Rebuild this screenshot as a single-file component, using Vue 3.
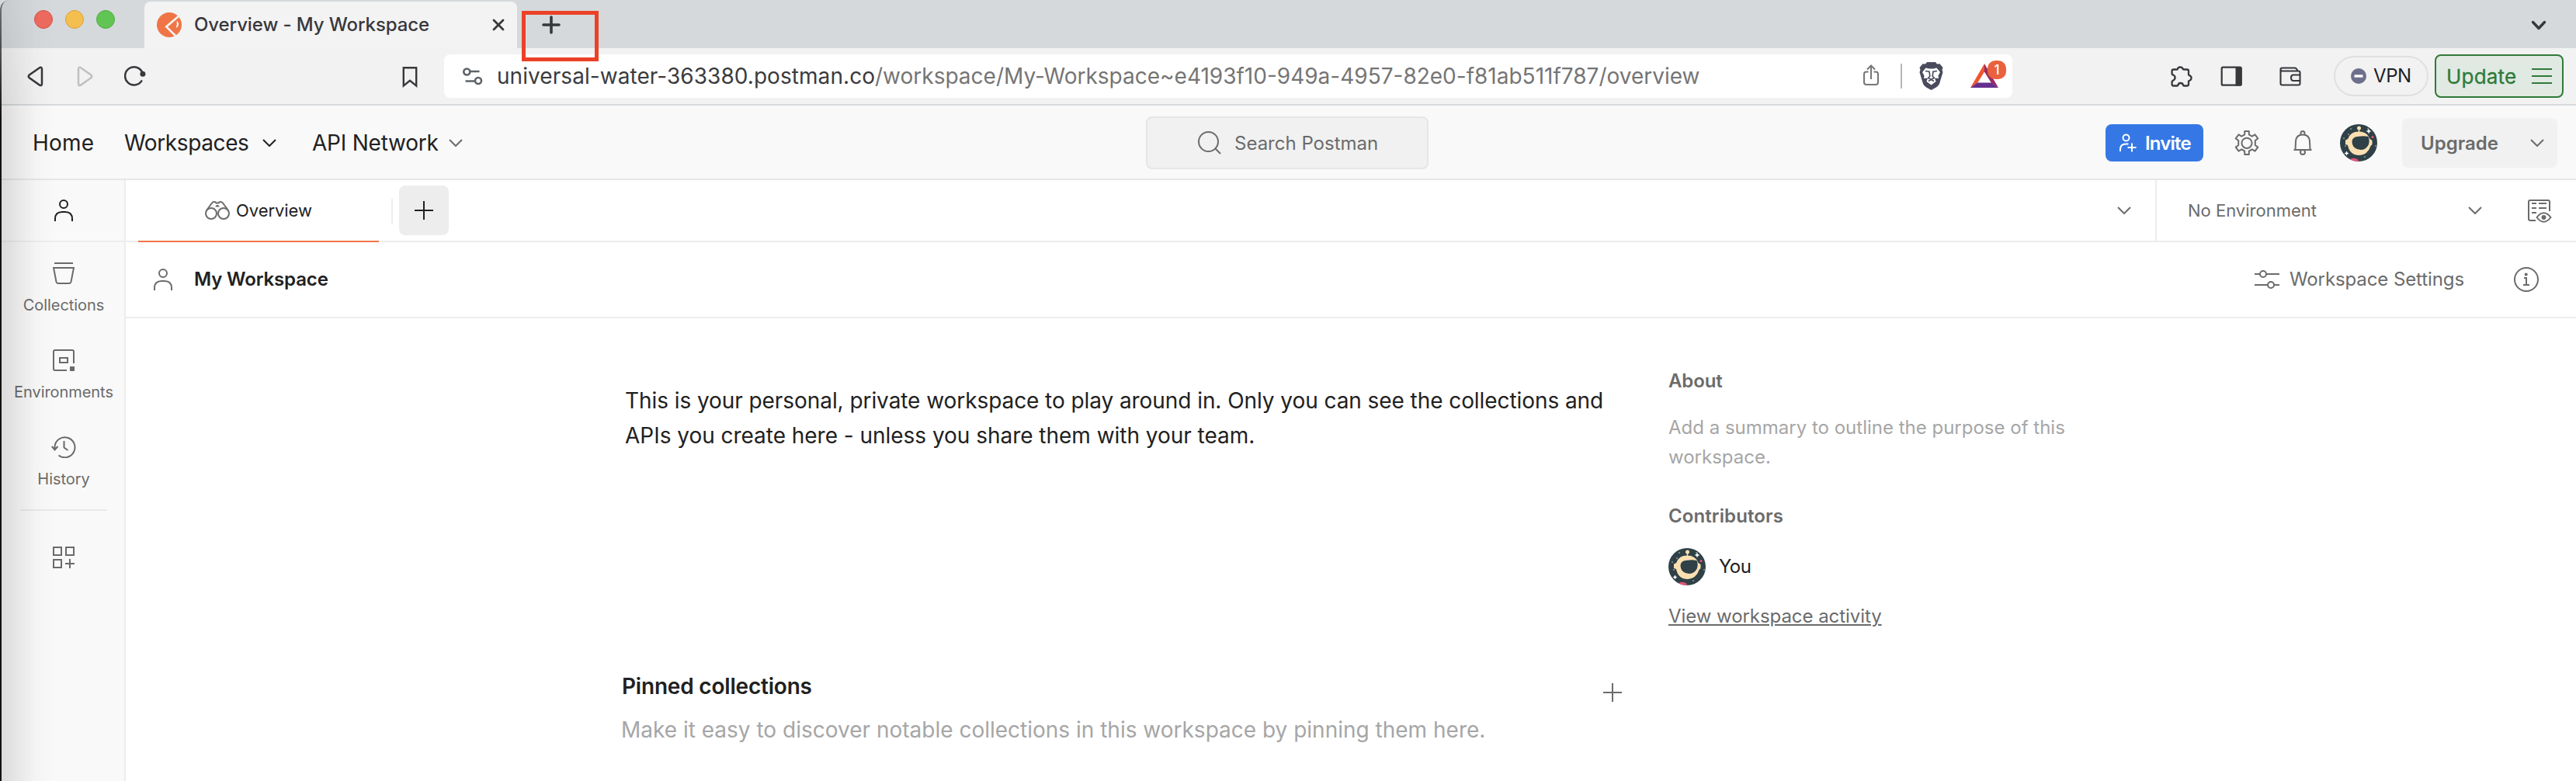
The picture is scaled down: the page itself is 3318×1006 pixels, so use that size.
<script setup>
const nav = [
  { label: 'Collections', icon: 'collections' },
  { label: 'Environments', icon: 'environments' },
  { label: 'History', icon: 'history' }
]
const stars = [[5, 18], [14, 6], [11, 13], [7, 28], [46, 28], [32, 42], [36, 6]]
</script>

<template>
  <div class="window">
    <header class="tabstrip">
      <div class="lights"><i class="red"></i><i class="amber"></i><i class="green"></i></div>
      <div class="btab">
        <svg width="32" height="32" viewBox="0 0 32 32">
          <circle cx="16" cy="16" r="16" fill="#f07546" />
          <path d="M28.5 4.5 12.2 18.4 24 30" fill="none" stroke="#f6f3f1" stroke-width="2.6" />
          <path d="M26.2 11.6Q29.6 15.5 25.4 19.4Q26.6 15.4 26.2 11.6Z" fill="#fff" stroke="#fff" stroke-width=".8" />
        </svg>
        <span class="btitle">Overview - My Workspace</span>
        <svg class="close" width="16" height="16" viewBox="0 0 16 16"><path d="M2 2 14 14M14 2 2 14" fill="none" stroke="#37383c" stroke-width="2.8" stroke-linecap="round" /></svg>
      </div>
      <div class="newtab">
        <svg width="24" height="24" viewBox="0 0 24 24"><path d="M12 2V22M2 12H22" fill="none" stroke="#37383c" stroke-width="3.6" stroke-linecap="round" /></svg>
        <div class="marker"></div>
      </div>
      <svg class="strip-chev" width="20" height="14" viewBox="0 0 20 14"><path d="M2.5 2.5 10 10.5 17.5 2.5" fill="none" stroke="#37383c" stroke-width="3.4" stroke-linecap="round" stroke-linejoin="round" /></svg>
    </header>

    <div class="toolbar">
      <svg class="back" width="21" height="27" viewBox="0 0 21 27"><path d="M16 2.2 2.8 11.4Q.8 13.4 2.8 15.4L16 24.6Q19 26 19 22.8V4Q19 .8 16 2.2Z" fill="none" stroke="#37383c" stroke-width="2.5" /></svg>
      <svg class="fwd" width="21" height="27" viewBox="0 0 21 27"><path d="M5 2.2 18.2 11.4Q20.2 13.4 18.2 15.4L5 24.6Q2 26 2 22.8V4Q2 .8 5 2.2Z" fill="none" stroke="#c0c0c0" stroke-width="2.5" /></svg>
      <svg class="reload" width="28" height="28" viewBox="0 0 28 28"><path d="M23.6 10A11.6 11.6 0 1 0 22.3 20.4" fill="none" stroke="#37383c" stroke-width="2.5" stroke-linecap="round" /><circle cx="23.9" cy="11.3" r="3.5" fill="#37383c" /></svg>
      <svg class="bookmark" width="20" height="28" viewBox="0 0 20 28"><path d="M1.8 2.2H18.2V25.4L10 18.8 1.8 25.4Z" fill="none" stroke="#37383c" stroke-width="2.4" /></svg>
      <div class="urlbar">
        <svg class="tune" width="26" height="24" viewBox="0 0 26 24" fill="none" stroke="#5f6368" stroke-width="2.6"><circle cx="5.3" cy="6.5" r="4" /><path d="M9.5 6H21.5M3.5 18.5H15" /><circle cx="20" cy="18" r="4" /></svg>
        <span class="url"><b>universal-water-363380.postman.co</b>/workspace/My-Workspace~e4193f10-949a-4957-82e0-f81ab511f787/overview</span>
        <svg class="share" width="20" height="28" viewBox="0 0 20 28" fill="none" stroke="#76767a" stroke-width="2"><path d="M6.5 9.5H4Q1 9.5 1 12.5V23Q1 26 4 26H16Q19 26 19 23V12.5Q19 9.5 16 9.5H13.5M10 19V1.5M5 6.5 10 1.5 15 6.5" /></svg>
        <i class="urlsep"></i>
        <svg class="lion" width="31" height="36" viewBox="0 0 31 36">
          <path d="M8 2.5 10 0H21L23 2.5 26.5 2.3 30.5 7 29.5 10 30.5 13 26 28Q25 30.5 22 32.5L15.5 36 9 32.5Q6 30.5 5 28L.5 13 1.5 10 .5 7 4.5 2.3Z" fill="#4a4c5e" />
          <path d="M8.5 7.5 13 8.5H18L22.5 7.5 27 13 24.5 17.5 25 21 20 20.5 21.5 25 15.5 29.5 9.5 25 11 20.5 6 21 6.5 17.5 4 13Z" fill="#fff" />
          <path d="M8 11.5 13 12.2 13.8 18 11.8 20.5 15.5 22.6 19.2 20.5 17.2 18 18 12.2 23 11.5M12 24.5 15.5 22.5 19 24.5" fill="none" stroke="#4a4c5e" stroke-width="1.7" />
        </svg>
        <div class="bat">
          <svg width="36" height="32" viewBox="0 0 36 32"><path d="M18 0V10.5L9 25 0 31Z" fill="#f0562e" /><path d="M18 0 36 31 27 25 18 10.5Z" fill="#982b62" /><path d="M0 31 9 24.5H27L36 31Z" fill="#662f8e" /></svg>
          <span class="badge">1</span>
        </div>
      </div>
      <svg class="puzzle" width="28" height="28" viewBox="0 0 28 28"><path d="M3.5 4.5H8.2Q9 4.5 9 3.5Q9.6 1.5 12.2 1.5Q14.8 1.5 15.5 3.5Q15.6 4.5 16.5 4.5H21Q23 4.5 23 6.5V11Q23 12 24 12.2Q26.5 13 26.5 15.5Q26.5 18 24 18.8Q23 19 23 20V23.5Q23 25.5 21 25.5H17Q16.2 25.5 16 24.5Q15.4 22 12.7 22Q10 22 9.4 24.5Q9.2 25.5 8.2 25.5H3.5Q1.6 25.5 1.6 23.5V20.5Q1.6 19.5 2.5 19Q5.6 17.5 5.6 15Q5.6 12.5 2.5 11.3Q1.6 11 1.6 10V6.5Q1.6 4.5 3.5 4.5Z" fill="none" stroke="#37383c" stroke-width="2.3" /></svg>
      <svg class="panel" width="28" height="26" viewBox="0 0 28 26"><rect x="1.7" y="1.7" width="25" height="23" rx="1.5" fill="none" stroke="#37383c" stroke-width="2.2" /><path d="M19.5 1H25.5Q27.5 1 27.5 3V23.5Q27.5 25.5 25.5 25.5H19.5Z" fill="#37383c" /></svg>
      <svg class="wallet" width="28" height="26" viewBox="0 0 28 26" fill="none" stroke="#37383c" stroke-width="2.1"><path d="M1.5 4V21.5Q1.5 23.5 3.5 23.5H24.5Q26.5 23.5 26.5 21.5V7.5Q26.5 5.5 24.5 5.5H3.5Q1.5 5.5 1.5 3.3Q1.5 1.5 3.5 1.5H20Q22 1.5 23.5 5.5" /><path d="M26.5 10.5H18Q15 10.5 15 14Q15 18 18 18H26.5" /></svg>
      <div class="vpn"><svg width="20" height="20" viewBox="0 0 20 20"><circle cx="10" cy="10" r="10" fill="#6d708b" /><path d="M4.5 10H15.5" stroke="#fff" stroke-width="3.4" /></svg><span>VPN</span></div>
      <div class="update"><span>Update</span><svg width="26" height="20" viewBox="0 0 26 20"><path d="M0 1H26M0 10H26M0 19H26" stroke="#2f7a38" stroke-width="2.2" /></svg></div>
    </div>

    <div class="apphead">
      <span class="home">Home</span>
      <span class="wss">Workspaces</span>
      <svg class="c1" width="18" height="10" viewBox="0 0 18 10"><path d="M1 1 9 9 17 1" fill="none" stroke="#212121" stroke-width="2" /></svg>
      <span class="apin">API Network</span>
      <svg class="c2" width="18" height="10" viewBox="0 0 18 10"><path d="M1 1 9 9 17 1" fill="none" stroke="#6b6b6b" stroke-width="2" /></svg>
      <div class="search">
        <svg width="30" height="30" viewBox="0 0 30 30" fill="none" stroke="#6b6b6b" stroke-width="2"><circle cx="13.5" cy="13.5" r="12.5" /><path d="M22.5 22.5 29 29" /></svg>
        <span>Search Postman</span>
      </div>
      <div class="headright">
        <div class="invite">
          <svg width="22" height="24" viewBox="0 0 22 24" fill="none" stroke="#fff" stroke-width="2"><circle cx="8.5" cy="5.5" r="4" /><path d="M1 23V20.5Q1 13.5 8 13.5H11.5M16 12.5V23.5M10.5 18H21.5" /></svg>
          <span>Invite</span>
        </div>
        <svg class="gear" width="32" height="32" viewBox="0 0 32 32" fill="none" stroke="#6b6b6b" stroke-width="2"><path d="M13.2 1H18.8V5.3L22.7 7.6 26.5 5.4 30.3 10.4 26.8 13V19L30.3 21.6 26.5 26.6 22.7 24.4 18.8 26.7V31H13.2V26.7L9.3 24.4 5.5 26.6 1.7 21.6 5.2 19V13L1.7 10.4 5.5 5.4 9.3 7.6 13.2 5.3Z" stroke-linejoin="round" /><circle cx="16" cy="16.3" r="6.6" /></svg>
        <svg class="bell" width="24" height="32" viewBox="0 0 24 32" fill="none" stroke="#6b6b6b" stroke-width="2"><path d="M.5 25H23.5M2.5 25 3 14Q3.5 5.5 12 5.5Q20.5 5.5 21 14L21.5 25M9.5 6V3.5Q9.5 1 12 1Q14.5 1 14.5 3.5V6" /><circle cx="12" cy="28" r="3" /></svg>
        <svg class="avatar" width="48" height="48" viewBox="0 0 48 48">
          <circle cx="24" cy="24" r="24" fill="#2f4147" />
          <circle v-for="(s, i) in stars" :key="i" :cx="s[0]" :cy="s[1]" r=".8" fill="#cfd6d8" />
          <path d="M37 5.5 38 8 40.5 9 38 10 37 12.5 36 10 33.5 9 36 8ZM8.5 34.5 9.5 36.5 11.5 37.5 9.5 38.5 8.5 40.5 7.5 38.5 5.5 37.5 7.5 36.5Z" fill="#fff" />
          <path d="M24 9.5Q13.5 9.5 10.5 18.5Q9 20 7 20.5V26L10 27Q12.5 40 25 40Q36 39 39.5 28L41.5 26V21L38.5 19Q35 9.5 24 9.5Z" fill="#fbdfb1" />
          <circle cx="24.500" cy="5" r="2.5" fill="#fbdfb1" /><path d="M24.5 6V11" stroke="#fbdfb1" stroke-width="1.4" />
          <path d="M24 15.700Q31 14.500 36.500 16Q38.500 20 37 26Q33.500 33 27 33Q15.500 32 15.500 22Q16 16 24 15.700Z" fill="#2f4147" />
          <circle cx="42" cy="16.5" r="1.5" fill="#e9547b" /><path d="M13 45Q19 41.500 25 47Q18 49 13 45Z" fill="#e9547b" />
        </svg>
        <div class="upgrade"><span>Upgrade</span><svg width="18" height="10" viewBox="0 0 18 10"><path d="M1 1 9 9 17 1" fill="none" stroke="#6b6b6b" stroke-width="2" /></svg></div>
      </div>
    </div>

    <div class="body">
      <aside class="side">
        <div class="me"><svg width="24" height="28" viewBox="0 0 24 28" fill="none" stroke="#212121" stroke-width="2"><circle cx="12" cy="6" r="5" /><path d="M1 28V25Q1 16 10 16H14Q23 16 23 25V28" /></svg></div>
        <div v-for="n in nav" :key="n.label" class="item">
          <svg v-if="n.icon === 'collections'" width="28" height="28" viewBox="0 0 28 28" fill="none" stroke="#6b6b6b" stroke-width="2"><path d="M2 1H26M1 7H27L23.5 25Q23 27 21.5 27H6.5Q5 27 4.5 25Z" /></svg>
          <svg v-else-if="n.icon === 'environments'" width="28" height="28" viewBox="0 0 28 28" fill="none" stroke="#6b6b6b" stroke-width="2"><path d="M18 27H3Q1 27 1 25V3Q1 1 3 1H25Q27 1 27 3V18" /><rect x="9" y="11" width="10" height="6" /><path d="M22 22H28V28H22Z" fill="#6b6b6b" stroke="none" /></svg>
          <svg v-else width="32" height="28" viewBox="0 0 32 28" fill="none" stroke="#6b6b6b" stroke-width="2"><path d="M4.5 17V13.5A13 13 0 1 1 9.5 24.5M.8 13 4.5 17.5 8.5 13M16.5 6V14.5L21.5 18" /></svg>
          <span>{{ n.label }}</span>
        </div>
        <i class="rule"></i>
        <svg class="grid" width="28" height="28" viewBox="0 0 28 28" fill="none" stroke="#6b6b6b" stroke-width="2"><rect x="1" y="1" width="10" height="10" /><rect x="17" y="1" width="10" height="10" /><rect x="1" y="17" width="10" height="10" /><path d="M22 16V28M16 22H28" /></svg>
      </aside>

      <main class="main">
        <div class="tabs">
          <div class="tab">
            <svg width="32" height="24" viewBox="0 0 32 24" fill="none" stroke="#6b6b6b" stroke-width="2"><circle cx="8" cy="16" r="7" /><circle cx="24" cy="16" r="7" /><path d="M2 12 9 2.5Q10 1 12 1Q14 1 14.5 2.5H17.5Q18 1 20 1Q22 1 23 2.5L30 12" /><path d="M13 7.5 15 5H17L19 7.5Z" fill="#6b6b6b" stroke="none" /></svg>
            <span>Overview</span>
          </div>
          <i class="tabsep"></i>
          <div class="addtab"><svg width="24" height="24" viewBox="0 0 24 24"><path d="M12 0V24M0 12H24" stroke="#212121" stroke-width="2" /></svg></div>
          <svg class="more" width="18" height="10" viewBox="0 0 18 10"><path d="M1 1 9 9 17 1" fill="none" stroke="#6b6b6b" stroke-width="2" /></svg>
          <div class="env">
            <span>No Environment</span>
            <svg class="ec" width="18" height="10" viewBox="0 0 18 10"><path d="M1 1 9 9 17 1" fill="none" stroke="#6b6b6b" stroke-width="2" /></svg>
            <svg class="ei" width="31" height="30" viewBox="0 0 31 30" fill="none" stroke="#6b6b6b" stroke-width="2"><path d="M10 27H3Q1 27 1 25V3Q1 1 3 1H26Q28 1 28 3V15M5 5H11M14 5H24M5 11H11M14 11H24M5 17H11M11.5 23Q20.5 11.5 29.5 23Q20.5 34.5 11.5 23Z" /><circle cx="20.5" cy="23" r="2" fill="#6b6b6b" /></svg>
          </div>
        </div>

        <div class="wsbar">
          <svg width="24" height="28" viewBox="0 0 24 28" fill="none" stroke="#6b6b6b" stroke-width="2"><circle cx="12" cy="6" r="5" /><path d="M1 28V25Q1 16 10 16H14Q23 16 23 25V28" /></svg>
          <span class="wsname">My Workspace</span>
          <svg class="sliders" width="32" height="24" viewBox="0 0 32 24" fill="none" stroke="#6b6b6b" stroke-width="2"><path d="M0 5H7M15 5H32M0 19H17M25 19H32" /><circle cx="11" cy="5" r="4" /><circle cx="21" cy="19" r="4" /></svg>
          <span class="wsset">Workspace Settings</span>
          <svg class="info" width="32" height="32" viewBox="0 0 32 32" fill="none" stroke="#6b6b6b" stroke-width="2"><circle cx="16" cy="16" r="15" /><path d="M13 14H16V23M12 23H20" /><circle cx="15.7" cy="9.5" r="2" fill="#6b6b6b" stroke="none" /></svg>
        </div>

        <div class="content">
          <section class="left">
            <p class="desc"><span class="tight">This is your personal, private workspace to play around in. Only you can see the collections and</span><br />APIs you create here - unless you share them with your team.</p>
            <div class="pinhead">
              <h2>Pinned collections</h2>
              <svg width="24" height="24" viewBox="0 0 24 24"><path d="M12 0V24M0 12H24" stroke="#6b6b6b" stroke-width="2" /></svg>
            </div>
            <p class="pinhint">Make it easy to discover notable collections in this workspace by pinning them here.</p>
          </section>
          <section class="right">
            <h3 class="about">About</h3>
            <p class="summary">Add a summary to outline the purpose of this<br />workspace.</p>
            <h3 class="contrib">Contributors</h3>
            <div class="person">
              <svg width="48" height="48" viewBox="0 0 48 48">
                <circle cx="24" cy="24" r="24" fill="#2f4147" />
                <circle v-for="(s, i) in stars" :key="i" :cx="s[0]" :cy="s[1]" r=".8" fill="#cfd6d8" />
                <path d="M37 5.5 38 8 40.5 9 38 10 37 12.5 36 10 33.5 9 36 8ZM8.5 34.5 9.5 36.5 11.5 37.5 9.5 38.5 8.5 40.5 7.5 38.5 5.5 37.5 7.5 36.5Z" fill="#fff" />
                <path d="M24 9.5Q13.5 9.5 10.5 18.5Q9 20 7 20.5V26L10 27Q12.5 40 25 40Q36 39 39.5 28L41.5 26V21L38.5 19Q35 9.5 24 9.5Z" fill="#fbdfb1" />
                <circle cx="24.500" cy="5" r="2.5" fill="#fbdfb1" /><path d="M24.5 6V11" stroke="#fbdfb1" stroke-width="1.4" />
                <path d="M24 15.700Q31 14.500 36.500 16Q38.500 20 37 26Q33.500 33 27 33Q15.500 32 15.500 22Q16 16 24 15.700Z" fill="#2f4147" />
                <circle cx="42" cy="16.5" r="1.5" fill="#e9547b" /><path d="M13 45Q19 41.500 25 47Q18 49 13 45Z" fill="#e9547b" />
              </svg>
              <span>You</span>
            </div>
            <a class="activity">View workspace activity</a>
          </section>
        </div>
      </main>
    </div>
    <div class="shade"></div>
  </div>
</template>

<style>
body { margin: 0; background: #fff; }
</style>

<style scoped>
.window { position: relative; width: 3318px; height: 1006px; overflow: hidden; display: flex; flex-direction: column; font-family: Inter, sans-serif; font-size: 24px; white-space: nowrap; color: #212121; background: #fff; }
.window * { box-sizing: border-box; }
svg { display: block; flex: none; }
i { display: block; flex: none; }
p, h2, h3 { margin: 0; }

.tabstrip { flex: none; height: 62px; display: flex; background: #d5d9dc; }
.lights { display: flex; gap: 16px; margin: 13px 0 0 44px; }
.lights i { width: 24px; height: 24px; border-radius: 50%; border: 1px solid; }
.red { background: #ed6a5e; border-color: #d5544a !important; }
.amber { background: #f5bf4f; border-color: #d9a13b !important; }
.green { background: #61c554; border-color: #4fab43 !important; }
.btab { display: flex; align-items: center; width: 480px; height: 60px; margin: 2px 0 0 38px; padding: 0 16px; border-radius: 8px 8px 0 0; background: #f3f3f3; }
.btitle { margin: 0 auto 1px 16px; font-weight: 500; letter-spacing: -.09px; color: #37383c; }
.newtab { position: relative; margin: 20px 0 0 32px; }
.marker { position: absolute; left: -26px; top: -6px; width: 99px; height: 65px; border: 5px solid #ec4127; z-index: 3; }
.strip-chev { margin: 26px 38px 0 auto; }

.toolbar { flex: none; height: 74px; display: flex; align-items: flex-start; background: #f2f2f2; border-bottom: 2px solid #d5d9dc; }
.toolbar > svg { margin-top: 23px; }
.toolbar > .back { margin-left: 35px; }
.toolbar > .fwd { margin-left: 43px; }
.toolbar > .reload { margin: 22px 0 0 40px; }
.toolbar > .bookmark { margin-left: 330px; }
.urlbar { display: flex; align-items: flex-start; width: 2020px; height: 56px; margin: 8px 0 0 34px; border-radius: 8px; background: #fff; }
.tune { margin: 16px 0 0 24px; }
.url { width: 1745px; margin: 0 auto 0 18px; font-size: 28px; line-height: 56px; color: #757575; }
.url b { font-weight: 400; letter-spacing: .06px; color: #3b3b3e; }
.share { margin-top: 13px; }
.urlsep { width: 2px; height: 32px; margin: 12px 22px 0 28px; background: #b6b6b6; }
.lion { margin-top: 10px; }
.bat { position: relative; margin: 12px 18px 0 35px; }
.badge { position: absolute; left: 22px; top: -4px; width: 24px; height: 24px; border-radius: 10px; background: #ea613d; color: #fff; font-size: 17px; font-weight: 500; line-height: 24px; text-align: center; }
.toolbar > .puzzle { margin-left: 204px; }
.toolbar > .panel { margin: 23px 0 0 36px; }
.toolbar > .wallet { margin: 24px 0 0 48px; }
.vpn { display: flex; align-items: center; width: 122px; height: 52px; margin: 10px 0 0 42px; padding: 0 0 0 20px; border: 2px solid #e0e0e0; border-radius: 26px; color: #1d1e26; }
.vpn span { margin: 0 0 1px 9px; letter-spacing: -.4px; }
.update { display: flex; align-items: center; justify-content: space-between; width: 166px; height: 56px; margin: 8px 0 0 8px; padding: 0 13px 0 13px; border: 2px solid #2f7a38; border-radius: 8px; background: #e1e9e3; color: #2f7a38; font-size: 26px; letter-spacing: .2px; -webkit-text-stroke: .3px #2f7a38; }

.apphead { flex: none; height: 96px; display: flex; align-items: center; background: #f9f9f9; border-bottom: 2px solid #e6e6e6; font-size: 28px; padding-top: 2px; }
.home { width: 118px; margin-left: 42px; letter-spacing: .2px; }
.wss { width: 178px; letter-spacing: -.38px; }
.apin { width: 176px; margin-left: 46px; letter-spacing: -.22px; }
.search { display: flex; align-items: center; width: 364px; height: 68px; margin: 0 0 0 880px; padding-left: 65px; border: 2px solid #e6e6e6; border-radius: 8px; background: #f1f1f1; color: #6b6b6b; font-size: 24px; }
.search span { margin-left: 17px; }
.headright { display: flex; align-items: center; margin: 0 24px 0 auto; }
.invite { display: flex; align-items: center; width: 126px; height: 48px; padding-left: 18px; border-radius: 8px; background: #3578e5; color: #fff; font-size: 24px; font-weight: 600; letter-spacing: -.8px; }
.invite span { margin-left: 11px; }
.gear { margin-left: 40px; }
.bell { margin-left: 44px; }
.avatar { margin-left: 36px; }
.upgrade { display: flex; align-items: center; justify-content: space-between; width: 200px; height: 64px; margin-left: 32px; padding: 0 17px 0 24px; border-radius: 8px; background: #f1f1f1; color: #6b6b6b; font-size: 24px; font-weight: 600; }

.body { flex: 1; display: flex; min-height: 0; }
.side { flex: none; width: 162px; display: flex; flex-direction: column; align-items: center; background: #f9f9f9; border-right: 2px solid #ededed; color: #6b6b6b; padding-left: 4px; }
.me { align-self: stretch; height: 80px; margin-left: -4px; padding: 25px 0 0 70px; border-bottom: 2px solid #ededed; }
.item { display: flex; flex-direction: column; align-items: center; height: 112px; padding-top: 26px; }
.item span { margin-top: 14px; font-size: 20px; line-height: 26px; letter-spacing: -.06px; }
.rule { width: 112px; height: 2px; margin-top: 8px; background: #e9e9e9; }
.grid { margin-top: 46px; }

.main { flex: 1; display: flex; flex-direction: column; min-width: 0; }
.tabs { flex: none; height: 80px; display: flex; align-items: center; border-bottom: 2px solid #ededed; font-size: 22px; }
.tab { position: relative; display: flex; align-items: center; width: 310px; height: 78px; margin-left: 16px; padding-left: 86px; }
.tab::after { content: ''; position: absolute; left: 0; right: 0; bottom: -2px; height: 2px; background: #f07546; }
.tab span { margin-left: 8px; letter-spacing: -.06px; }
.tabsep { width: 2px; height: 32px; margin: 2px 8px 0 16px; background: #ededed; }
.addtab { display: flex; align-items: center; justify-content: center; width: 64px; height: 64px; border-radius: 8px; background: #ededed; }
.more { margin: 0 31px 0 auto; }
.env { display: flex; align-items: center; width: 542px; height: 78px; padding: 0 31px 0 40px; border-left: 2px solid #ededed; color: #6b6b6b; }
.ec { margin: 0 59px 0 auto; }
.ei { margin-top: 2px; }

.wsbar { flex: none; height: 98px; display: flex; align-items: center; padding: 0 48px 0 36px; border-bottom: 2px solid #ededed; color: #6b6b6b; }
.wsname { margin: 0 auto 1px 28px; font-weight: 600; letter-spacing: -.13px; color: #212121; }
.wsset { margin: 0 0 1px 13px; letter-spacing: -.1px; }
.info { margin-left: 64px; }

.content { flex: 1; display: flex; }
.left { width: 1289px; margin-left: 638px; padding-top: 84px; font-size: 28px; }
.desc { margin-left: 5px; line-height: 45px; letter-spacing: -.03px; }
.tight { letter-spacing: -.07px; }
.pinhead { display: flex; align-items: flex-start; justify-content: space-between; margin-top: 280px; }
.pinhead svg { margin-top: 16px; }
h2 { margin-left: 1px; font-size: 28px; font-weight: 600; line-height: 40px; letter-spacing: -.2px; }
.pinhint { margin-top: 16px; line-height: 40px; color: #a6a6a6; }
.right { margin-left: 60px; padding-top: 62px; line-height: 38px; color: #6b6b6b; }
h3 { font-size: 24px; font-weight: 600; }
.about { letter-spacing: -.1px; }
.summary { margin: 22px 0 0; color: #a6a6a6; }
.contrib { margin-top: 38px; letter-spacing: .1px; }
.person { display: flex; align-items: center; margin-top: 22px; color: #212121; }
.person span { margin-left: 17px; letter-spacing: -.6px; }
.activity { display: block; margin: 21px 0 0; letter-spacing: -.06px; text-decoration: underline; text-decoration-thickness: 2px; text-underline-offset: 2px; }

.shade { position: absolute; left: 0; top: 0; width: 70px; height: 1006px; border-left: 2px solid #111; border-top-left-radius: 12px; background: linear-gradient(90deg, rgba(0, 0, 0, .12), rgba(0, 0, 0, .07) 30%, rgba(0, 0, 0, .02) 65%, transparent); -webkit-mask-image: linear-gradient(rgba(0, 0, 0, .5), #000 150px); mask-image: linear-gradient(rgba(0, 0, 0, .5), #000 150px); pointer-events: none; }
</style>
